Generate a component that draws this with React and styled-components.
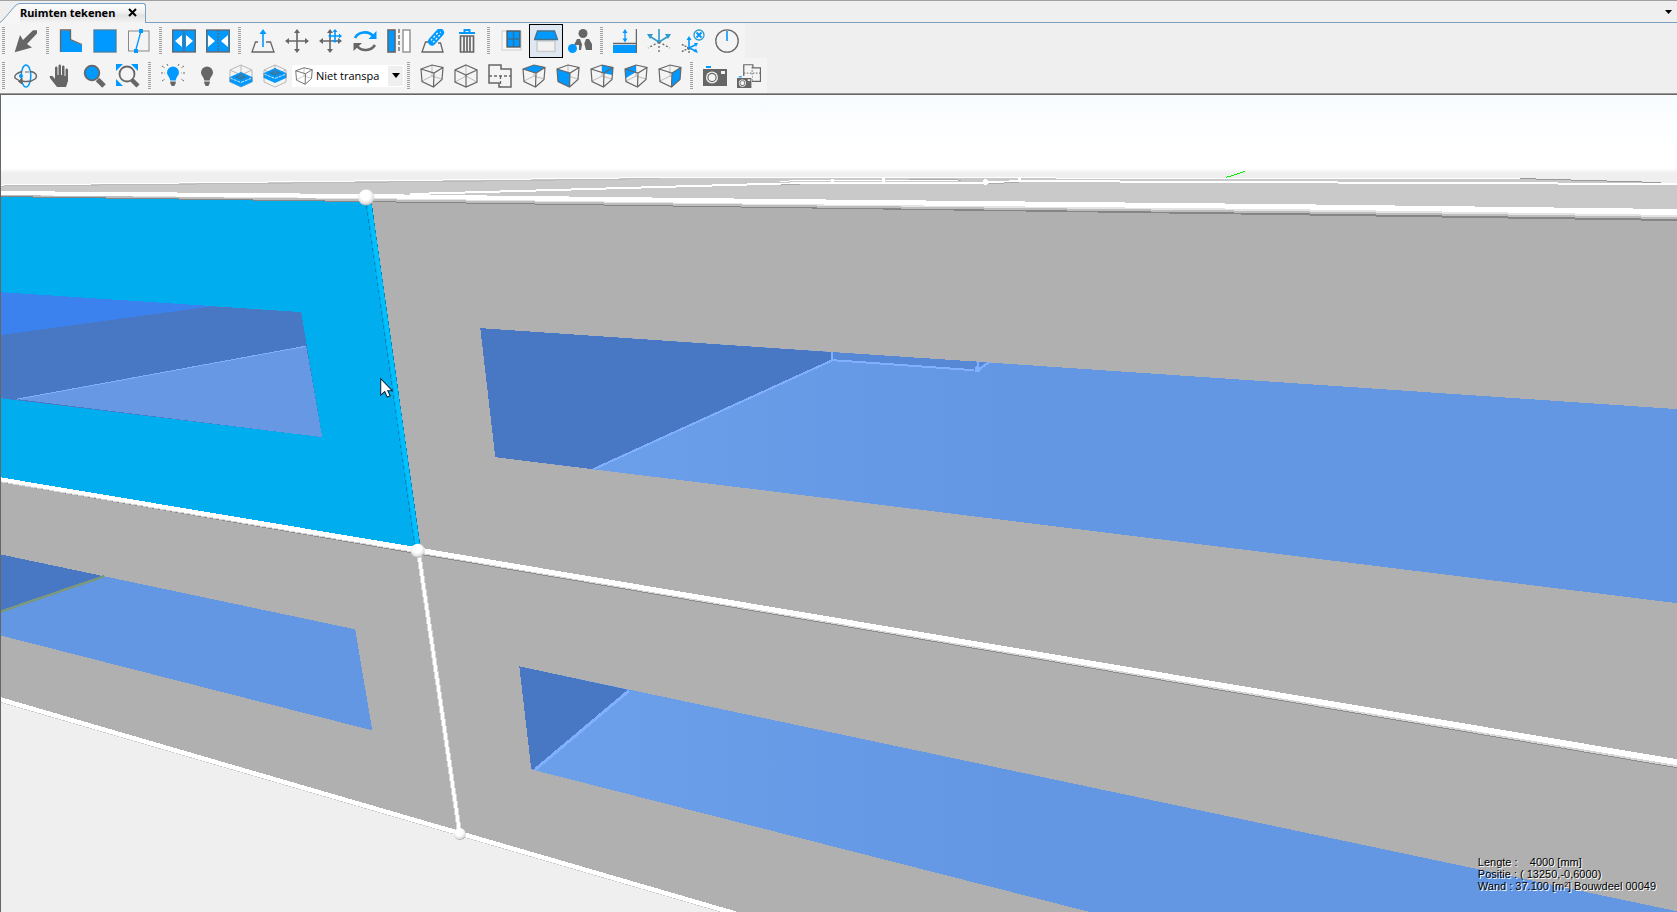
import React from "react";
import styled, { createGlobalStyle, css } from "styled-components";

const G = "#666666";
const B = "#0099ff";

const GlobalStyle = createGlobalStyle`
  *, *::before, *::after { box-sizing: border-box; }
  html, body, #root { height: 100%; }
  body {
    margin: 0;
    overflow: hidden;
    background: #efefef;
    color: #000;
    font-family: "Open Sans", "Noto Sans", sans-serif;
    font-size: 12px;
  }
`;

const Window = styled.div`
  display: flex;
  flex-direction: column;
  height: 100%;
  border-top: 1px solid #a0a0a0;
`;

const TabStrip = styled.header`
  display: flex;
  height: 22px;
  flex: none;
  padding-top: 2px;
`;

const TabSlant = styled.svg`
  display: block;
  flex: none;
`;

const Tab = styled.div`
  display: flex;
  align-items: center;
  justify-content: space-between;
  width: 126px;
  padding: 0 8px 2px 0;
  border: 1px solid #7ba0c0;
  border-width: 1px 1px 0 0;
  border-radius: 0 3px 0 0;
  background: linear-gradient(#ffffff, #f0f0f0 45%, #e2e2e2 60%, #f4f4f4);
`;

const TabTitle = styled.h1`
  margin: 0;
  font-family: "Noto Sans", sans-serif;
  font-size: 11px;
  line-height: 16px;
  font-weight: 700;
  white-space: nowrap;
`;

const PlainButton = styled.button`
  display: grid;
  place-items: center;
  padding: 0;
  border: 0;
  background: transparent;
`;

const TabFiller = styled.div`
  display: flex;
  flex: 1;
  align-items: center;
  justify-content: flex-end;
  padding: 0 5px 2px 0;
  border-bottom: 1px solid #7ba0c0;
`;

const Toolbars = styled.div`
  display: flex;
  flex-direction: column;
  align-items: flex-start;
  flex: none;
  border-bottom: 1px solid #999;
`;

const Toolbar = styled.div`
  display: flex;
  align-items: center;
  height: 35px;
  padding-right: 1px;
  background: #f4f4f4;
`;

const Grip = styled.span`
  width: 3px;
  height: 27px;
  margin: 0 5px 0 3px;
  background: repeating-linear-gradient(#a0a0a0 0 1px, #f4f4f4 1px 2px);
  &:first-child { margin: 0 4px 0 2px; }
`;

const ToolButton = styled(PlainButton)`
  width: 34px;
  height: 34px;
  ${(p) => p.$active && css`
    border: 1px solid #000;
    background: #dfe8f1;
  `}
`;

const Combo = styled.label`
  display: flex;
  align-items: center;
  width: 112px;
  height: 22px;
  padding: 0 1px 0 3px;
  gap: 3px;
  background: #fff;
`;

const ComboSelect = styled.select`
  appearance: none;
  flex: 1;
  min-width: 0;
  height: 22px;
  padding: 0;
  border: 0;
  background: transparent;
  color: #000;
  font: 11px/20px "Open Sans", "Noto Sans", sans-serif;
`;

const ComboArrow = styled.span`
  display: grid;
  place-items: center;
  width: 15px;
  height: 20px;
  background: #efefef;
`;

const Viewport = styled.main`
  position: relative;
  flex: 1;
  min-height: 0;
  border: solid #666;
  border-width: 1px 0 0 1px;
`;

const SceneSvg = styled.svg`
  display: block;
  width: 100%;
  height: 100%;
`;

const Status = styled.dl`
  position: absolute;
  right: 21px;
  bottom: 20px;
  margin: 0;
  font: 11px/12px "Liberation Sans", Arial, sans-serif;
  text-shadow: 1px 1px 0 #fff;
  white-space: pre;
`;

const StatusLine = styled.div`
  display: flex;
`;

const StatusTerm = styled.dt``;

const StatusValue = styled.dd`
  margin: 0;
`;

function Icon({ children, size = 24 }) {
  return (
    <svg width={size} height={size} viewBox="0 0 24 24" fill="none" stroke={G} strokeWidth="1.3" aria-hidden="true">
      {children}
    </svg>
  );
}

/* Wireframe box with an optional highlighted face. */
function Box({ face, size }) {
  return (
    <Icon size={size}>
      <path d="M12 1V12L2 17M12 12L22 15" stroke="#bbb" strokeWidth="1" />
      {face && <polygon points={face} fill={B} stroke="none" />}
      <path d="M1 5L12 1L23 3.5L22 15.5L13.5 23L2 17.5ZM1 5L14 9L23 3.5M14 9L13.5 23" strokeWidth="1.2" />
    </Icon>
  );
}

/* Wire box holding a blue slab whose top face is centred on the given height. */
function Slab({ y }) {
  return (
    <Icon>
      <path d="M12 1L23 6V18L12 23L1 18V6ZM1 6L12 11L23 6M12 1V8" stroke="#b8b8b8" strokeWidth="1" />
      <path d={`M1 ${y}L12 ${y - 5}L23 ${y}V${y + 5}L12 ${y + 10}L1 ${y + 5}Z`} fill={B} stroke="none" />
      <path d={`M5 ${y}L12 ${y - 3}L19 ${y}L12 ${y + 3}Z`} fill="#2b7fb5" stroke="none" />
      <path d={`M1 ${y + 1}L12 ${y + 5.5}L23 ${y + 1}`} stroke="#d8e8f4" strokeWidth="1" strokeDasharray="3 1" />
      <path d={`M12 ${y - 5}V${y}M1 ${y}V${y + 5}M23 ${y}V${y + 5}`} stroke="#5a7f99" strokeWidth="1" />
    </Icon>
  );
}

function Bulb({ color, rays }) {
  return (
    <Icon>
      {rays && (
        <path d="M1 2L4 4M23 2L20 4M0 9H3.500M24 9H20.500M1 17L4 15M23 17L20 15M6 0L7 2M18 0L17 2" stroke={G} strokeWidth="1" strokeDasharray="2 1" />
      )}
      <path d="M12 2.500a6 6 0 0 1 6 6c0 3-3 4.500-3.200 8H9.200C9 13 6 11.500 6 8.500a6 6 0 0 1 6-6Z" fill={color} stroke="none" />
      <path d="M9.200 17.500h5.600v1.500l-1.500 3h-2.600l-1.500-3Z" fill={G} stroke="none" />
    </Icon>
  );
}

const CameraShape = () => (
  <g stroke="none">
    <rect x="3" y="2" width="5" height="2" fill={B} />
    <path d="M0 5H24V22H0Z" fill={G} />
    <rect x="18" y="7" width="4" height="3" fill="#f4f4f4" />
    <circle cx="9" cy="13.500" r="6" fill="#f4f4f4" />
    <circle cx="9" cy="13.500" r="4.700" fill={G} />
    <circle cx="9" cy="13.500" r="3.500" fill="#f4f4f4" />
  </g>
);

const PLAN = "M1 1H13V5H23V23H11V19H1Z";

const icons = {
  select: <Icon><polygon points="0.7,23.3 6,6 9,11 19,1.3 23,1.3 23,4.5 13,15 18,18.5" fill={G} stroke="none" /></Icon>,
  outline: <Icon><path d="M1.500 1.500H11.500V11L23 16V23H1.500Z" fill={B} stroke="none" /><path d="M1.500 23V1H11.500V10.500L23 15.500" /></Icon>,
  rect: <Icon><rect x="1" y="1" width="22" height="22" fill={B} stroke="#477f9e" /></Icon>,
  split: <Icon><rect x="1.500" y="2" width="20.500" height="20" strokeWidth="1" stroke="#888" /><path d="M8.500 22L14 2" stroke={B} /><path d="M12 0H16V4H12ZM7 20H11V24H7Z" fill={B} stroke="none" /></Icon>,
  spread: <Icon><rect x="0.600" y="1" width="22.800" height="22" fill={B} /><path d="M12 1V23" /><path d="M10 6V18L3 12ZM14 6V18L21 12Z" fill="#fff" stroke="none" /></Icon>,
  join: <Icon><rect x="0.600" y="1" width="22.800" height="22" fill={B} /><path d="M12 1V23" strokeDasharray="2 1" /><path d="M2 6V18L9 12ZM22 6V18L15 12Z" fill="#fff" stroke="none" /></Icon>,
  extrude: <Icon><path d="M7 13H4.500L1 23H23L19.500 13H15" /><path d="M12 18V3" stroke={B} strokeWidth="1.600" /><path d="M8.500 5L12 0L15.500 5Z" fill={B} stroke="none" /></Icon>,
  move: <Icon><path d="M12 3V21M3 12H21" strokeWidth="1.600" /><path d="M12 0L15 4H9ZM12 24L15 20H9ZM0 12L4 9V15ZM24 12L20 9V15Z" fill={G} stroke="none" /></Icon>,
  copyMove: <Icon><path d="M11 3V21M3 12H21" strokeWidth="1.600" /><path d="M11 0L14 4H8ZM11 24L14 20H8ZM0 12L4 9V15ZM23 12L19 9V15Z" fill={G} stroke="none" /><path d="M16 1V13M10 7H22" stroke={B} strokeWidth="1.600" /><path d="M16 0L18.500 3H13.500ZM16 14L18.500 11H13.500ZM9 7L12 4.500V9.500ZM23 7L20 4.500V9.500Z" fill={B} stroke="none" /></Icon>,
  rotate: <Icon><path d="M2 9C5 3 15 1 20 7" stroke={B} strokeWidth="2.600" /><path d="M23.500 2V10H15.500Z" fill={B} stroke="none" /><path d="M22 16C18 22 9 23 4 17" strokeWidth="2.600" /><path d="M0.500 22V14H9Z" fill={G} stroke="none" /></Icon>,
  mirror: <Icon><rect x="1" y="1" width="7" height="22" fill={B} strokeWidth="1.600" /><path d="M12 0V24" strokeDasharray="4 2" /><rect x="16" y="1" width="7" height="22" stroke="#888" fill="#fff" /></Icon>,
  repair: <Icon><path d="M7 13H4.500L1 23H22L19.500 14H17" /><g transform="rotate(-48 15 8)"><rect x="5" y="4" width="20" height="8" rx="4" fill={B} stroke="none" /><path d="M9 6.500h2M9 9.500h2M13 6.500h2M13 9.500h2M17 6.500h2M17 9.500h2M21 8h1" stroke="#fff" strokeWidth="1.200" /></g></Icon>,
  trash: <Icon><path d="M4 4H20M9.500 3V1H14.500V3" stroke={B} strokeWidth="2" /><path d="M5.500 7H18.500V23H5.500ZM9 7V23M12 7V23M15 7V23" strokeWidth="1.700" /></Icon>,
  window: <Icon><rect x="2" y="2" width="19" height="19" stroke="#ccc" fill="#f8f8f8" strokeWidth="1" /><rect x="7" y="2" width="13" height="16" fill={B} stroke="#555" /><path d="M13.500 2V18M7 10H20" stroke="#356f96" /></Icon>,
  roof: <Icon><path d="M3 12H21V22.500H3Z" fill="#f2f2f2" stroke="#ccc" strokeWidth="1.600" /><path d="M3.500 2H20.500L23.500 10.500H0.500Z" fill={B} stroke="#46718c" /></Icon>,
  people: <Icon><circle cx="15" cy="4.500" r="4.500" fill={G} stroke="none" /><path d="M9 10H12L15 18L18 10H21L24 15V21H11V16H6Z" fill={G} stroke="none" /><path d="M15 10L13 21H18Z" fill="#f4f4f4" stroke="none" /><circle cx="4.500" cy="19.500" r="4.500" fill={B} stroke="none" /></Icon>,
  level: <Icon><rect x="0" y="16" width="23" height="8" fill={B} stroke="none" /><path d="M0 14.500H23.500M23.500 0V24" strokeWidth="1.500" /><path d="M12 3V11" stroke={B} /><path d="M12 0L14.500 4H9.500ZM12 13.500L14.500 9.500H9.500Z" fill={B} stroke="none" /></Icon>,
  axes: <Icon><path d="M12 13L1 19M12 13L23 19M12 13V24" strokeDasharray="2 2" /><path d="M12 13V0M12 13L3 7.500M12 13L21 7.500" stroke="#2f9acb" strokeWidth="1.600" /><path d="M0 5H6L3 10ZM24 5H18L21 10Z" fill="#2f9acb" stroke="none" /></Icon>,
  axesPoint: <Icon><path d="M8 19L0 15M8 19L0 23M8 19V24" strokeDasharray="2 1" /><path d="M8 19V9M8 19L14 16M8 19L15 22" stroke={B} strokeWidth="1.600" /><path d="M8 7L10.500 11H5.500ZM17 14L13 14L15 18ZM17 24L12.500 22.500L15 19.500Z" fill={B} stroke="none" /><circle cx="18" cy="6" r="5" stroke="#2f9acb" /><path d="M15.500 3.500L20.500 8.500M20.500 3.500L15.500 8.500" stroke={B} strokeWidth="2" /></Icon>,
  dial: <Icon><circle cx="12" cy="12" r="11.200" /><path d="M12 12V2" stroke={B} strokeWidth="1.600" /></Icon>,

  orbit: <Icon><ellipse cx="12" cy="12" rx="4.800" ry="11" stroke={B} strokeWidth="1.500" /><path d="M16 7.500C22 8 24 12 21 15C18 17.500 13 18 8 17M8 7.500C3 9 0 11 1 14L5 16.500" strokeWidth="1.400" /><path d="M8 14L4.500 17.500L8 20ZM15 8H11" fill={G} strokeWidth="1" /><circle cx="7" cy="12" r="2" fill={B} stroke="none" /></Icon>,
  pan: <Icon><path d="M9 23L2 14C1 12 3 11 5 12.500L7 15V4C7 2 9.500 2 9.500 4V11H10.500V2C10.500 0 13 0 13 2V11H14V3C14 1 16.500 1 16.500 3V12H17.500V6C17.500 4 20 4 20 6V17L18 23Z" fill={G} stroke="none" /></Icon>,
  zoom: <Icon><path d="M15.500 15.500L22 22" strokeWidth="5" /><circle cx="10" cy="9" r="7.300" fill={B} strokeWidth="1.800" /></Icon>,
  zoomFit: <Icon><path d="M0 0H7L0 7ZM22 0V7L15 0ZM0 22V15L7 22Z" fill={B} stroke="none" /><path d="M16 16L22 22" strokeWidth="4.500" /><circle cx="11" cy="10" r="7.500" fill="#f4f4f4" strokeWidth="1.800" /></Icon>,
  lightOn: <Bulb color={B} rays />,
  lightOff: <Bulb color={G} />,
  slabLow: <Slab y={13} />,
  slabMid: <Slab y={9} />,
  perspective: <Box />,
  isometric: <Icon><path d="M12 1V12L1 18M12 12L23 18" stroke="#bbb" strokeWidth="1" /><path d="M12 1L23 6V18L12 23L1 18V6ZM1 6L12 11L23 6M12 11V23" strokeWidth="1.200" /></Icon>,
  plan: <Icon><path d={PLAN} strokeWidth="1.500" /><path d="M1 12H23M12.500 12V23" strokeDasharray="3 2" /></Icon>,
  top: <Box face="1,5 12,1 23,3.500 14,9" />,
  front: <Box face="1,5 14,9 13.500,23 2,17.500" />,
  back: <Box face="12,1 23,3.500 22.500,11 12,9" />,
  left: <Box face="1,5 12,1 12,8 2,14" />,
  right: <Box face="14,9 23,3.500 22,15.500 13.500,23" />,
  camera: <Icon><CameraShape /></Icon>,
  planCamera: <Icon><g transform="translate(6 0) scale(.76)"><path d={PLAN} strokeWidth="1.600" /><path d="M1 12H23M12 4V23" strokeDasharray="2 2" /></g><path d="M0 12H15V24H0Z" fill="#f4f4f4" stroke="none" /><g transform="translate(0 11) scale(.6)"><CameraShape /></g></Icon>,
};

const drawTools = [
  [["select", "Selecteren"]],
  [["outline", "Veelhoek"], ["rect", "Rechthoek"], ["split", "Splitsen"]],
  [["spread", "Scheiden"], ["join", "Samenvoegen"]],
  [["extrude", "Extruderen"], ["move", "Verplaatsen"], ["copyMove", "Kopiëren"], ["rotate", "Roteren"], ["mirror", "Spiegelen"], ["repair", "Herstellen"], ["trash", "Verwijderen"]],
  [["window", "Raam"], ["roof", "Dak"], ["people", "Personen"]],
  [["level", "Peil"], ["axes", "Assen"], ["axesPoint", "Oorsprong"], ["dial", "Noordpijl"]],
];

const navTools = [["orbit", "Draaien"], ["pan", "Schuiven"], ["zoom", "Zoomen"], ["zoomFit", "Alles tonen"]];
const lightTools = [["lightOn", "Licht aan"], ["lightOff", "Licht uit"], ["slabLow", "Onderste laag"], ["slabMid", "Middelste laag"]];
const viewTools = [["perspective", "Perspectief"], ["isometric", "Isometrisch"], ["plan", "Plattegrond"], ["top", "Boven"], ["front", "Voor"], ["back", "Achter"], ["left", "Links"], ["right", "Rechts"]];
const photoTools = [["camera", "Foto"], ["planCamera", "Foto plattegrond"]];

function ToolGroup({ tools, active }) {
  return (
    <>
      <Grip />
      {tools.map(([id, label]) => (
        <ToolButton key={id} type="button" aria-label={label} aria-pressed={active === id} $active={active === id}>
          {icons[id]}
        </ToolButton>
      ))}
    </>
  );
}

function Node({ x, y, r }) {
  return <circle cx={x} cy={y} r={r} fill="url(#ball)" />;
}

function Scene() {
  return (
    <SceneSvg viewBox="1 95 1675 817" preserveAspectRatio="xMinYMin slice" role="img" aria-label="3D-model" shapeRendering="crispEdges">
      <defs>
        <linearGradient id="sky" x1="0" y1="0" x2="0" y2="1">
          <stop offset="0" stopColor="#f8fcff" />
          <stop offset=".7" stopColor="#ffffff" />
          <stop offset=".94" stopColor="#ffffff" />
          <stop offset="1" stopColor="#efefef" />
        </linearGradient>
        <linearGradient id="floor" gradientUnits="userSpaceOnUse" x1="600" y1="0" x2="1000" y2="0">
          <stop offset="0" stopColor="#6c9fea" />
          <stop offset="1" stopColor="#6497e3" />
        </linearGradient>
        <radialGradient id="ball" cx=".45" cy=".35" r=".68">
          <stop offset=".45" stopColor="#ffffff" />
          <stop offset=".8" stopColor="#dddddd" />
          <stop offset="1" stopColor="#999999" />
        </radialGradient>
      </defs>

      <rect x="0" y="94" width="1678" height="820" fill="#efefef" />
      <rect x="0" y="94" width="1678" height="79" fill="url(#sky)" />
      <polygon points="0,185 659,178 1519,178 1660,183 1677,184 1677,214 0,194" fill="#c9c9c9" />
      <polygon points="0,196 1677,218 1677,913 735,913 0,699" fill="#b0b0b0" />

      {/* roof edges near the horizon */}
      <path d="M0 186L480 181L659 178.500" stroke="#bbbbbb" fill="none" />
      <g fill="none" stroke="#fff">
        <path d="M0 185L659 177.500L1519 178.500" />
        <path d="M410 194L780 183.500L985 182.500L1019 181L1677 184" strokeWidth="2" />
        <path d="M780 181L960 180" />
      </g>
      <path d="M1519 178.500L1660 182.500" stroke="#999" fill="none" />
      <path d="M780 185L800 184M908 179L960 180M988 184L1018 182" stroke="#aaa" fill="none" />
      <g fill="#fff">
        <circle cx="832" cy="181" r="2" /><circle cx="883" cy="180" r="2" />
        <circle cx="985" cy="182" r="3" /><circle cx="1019" cy="180" r="2" /><circle cx="998" cy="177" r="1" />
      </g>
      <path d="M1225 177.500L1244 171.500" stroke="#00f000" />

      {/* selected wall and its window */}
      <polygon points="0,196 367,202 418,549 0,480" fill="#00aeef" />
      <polygon points="0,292 301,312 322,437 0,398" fill="#4878c4" />
      <polygon points="0,292 213,306 0,335" fill="#3c82ee" />
      <polygon points="17,399 306,346 322,437" fill="#6698e4" />
      <path d="M17 399L306 346" stroke="#82b0ff" />

      {/* upper right window */}
      <polygon points="480,328 1677,409 1677,603 495,457" fill="url(#floor)" />
      <polygon points="480,328 832,352 832,360 593,469 495,457" fill="#4878c4" />
      <polygon points="832,352 985,362 976,370 832,360" fill="#5688d6" />
      <path d="M593 469L832 360" stroke="#80b0ff" strokeWidth="2" />
      <path d="M832 352V360L973 370M977 361V370L989 362" stroke="#80b0ff" strokeWidth="2" fill="none" />
      <circle cx="977" cy="369" r="3" fill="#80b0ff" />

      {/* lower windows */}
      <polygon points="0,554 355,629 372,730 0,635" fill="#6497e3" />
      <polygon points="0,554 104,576 0,612" fill="#4878c4" />
      <path d="M0 611.500L104 576" stroke="#7b987f" strokeWidth="2.500" />
      <polygon points="519,666 1677,911 1677,913 1095,913 531,769" fill="url(#floor)" />
      <polygon points="519,666 630,690 534,769 531,769" fill="#4878c4" />
      <path d="M535 769L629 690" stroke="#80b0ff" strokeWidth="3" />

      {/* upper beam */}
      <polygon points="0,191 366,194 780,199 1280,204 1677,209 1677,221 1280,215 780,208 366,202 0,197" fill="#858585" />
      <polygon points="0,191 366,194 780,199 1280,204 1677,209 1677,219 1280,213 780,207 366,201 0,196" fill="#bdbdbd" />
      <polygon points="0,191 366,194 780,199 1280,204 1677,209 1677,217 1280,211 780,205 366,199 0,195" fill="#e4e4e4" />
      <polygon points="0,191 366,194 780,199 1280,204 1677,209 1677,215 1280,209 780,204 366,198 0,195" fill="#ffffff" />

      {/* middle beam */}
      <polygon points="0,477 417,547 1677,759 1677,768 417,554 0,482" fill="#8c8c8c" />
      <polygon points="0,477 417,547 1677,759 1677,767 417,553 0,482" fill="#d5d5d5" />
      <polygon points="0,477 417,547 1677,759 1677,765 417,552 0,481" fill="#ffffff" />

      {/* ground beam */}
      <path d="M0 701.500L740 917" stroke="#cccccc" />
      <path d="M0 699L740 914.500" stroke="#ffffff" strokeWidth="4.500" />

      {/* posts */}
      <path d="M418 550L459 830" stroke="#d5d5d5" strokeWidth="5" />
      <path d="M418 550L459 830" stroke="#ffffff" strokeWidth="3" />
      <path d="M368.500 203L417.500 548" stroke="#0784b4" strokeWidth="6" />
      <path d="M368.500 203L417.500 548" stroke="#00aeef" strokeWidth="5" />
      <path d="M369 203L418 548" stroke="#00bfff" strokeWidth="4" />

      <g shapeRendering="auto">
        <Node x={366} y={197.500} r={8} />
        <Node x={417.500} y={550.500} r={7} />
        <Node x={459.500} y={833.500} r={6} />
        <path d="M380.500 378.500V395L384.500 391.500L387 397L390 395.500L387.500 390.500H392Z" fill="#fff" stroke="#05233a" />
      </g>
    </SceneSvg>
  );
}

export default function App() {
  return (
    <Window>
      <GlobalStyle />
      <TabStrip>
        <TabSlant width="20" height="20" viewBox="0 0 20 20" aria-hidden="true">
          <path d="M0 20L2 18L15 3Q17.500 .5 20 .5V20Z" fill="#f6f6f6" />
          <path d="M0 19.500L2 18L15 3Q17.500 .5 20 .5" fill="none" stroke="#7ba0c0" />
        </TabSlant>
        <Tab>
          <TabTitle>Ruimten tekenen</TabTitle>
          <PlainButton type="button" aria-label="Sluiten">
            <svg width="9" height="9" viewBox="0 0 9 9"><path d="M1 1L8 8M8 1L1 8" stroke="#000" strokeWidth="2" /></svg>
          </PlainButton>
        </Tab>
        <TabFiller>
          <PlainButton type="button" aria-label="Vensters">
            <svg width="7" height="4" viewBox="0 0 7 4"><path d="M0 0H7L3.500 4Z" fill="#000" /></svg>
          </PlainButton>
        </TabFiller>
      </TabStrip>
      <Toolbars>
        <Toolbar role="toolbar" aria-label="Tekenen">
          {drawTools.map((tools, i) => <ToolGroup key={i} tools={tools} active="roof" />)}
        </Toolbar>
        <Toolbar role="toolbar" aria-label="Weergave">
          <ToolGroup tools={navTools} />
          <ToolGroup tools={lightTools} />
          <Combo>
            <Box size={18} />
            <ComboSelect aria-label="Transparantie" defaultValue="solid">
              <option value="solid">Niet transpa</option>
            </ComboSelect>
            <ComboArrow>
              <svg width="8" height="5" viewBox="0 0 8 5"><path d="M0 0H8L4 5Z" fill="#000" /></svg>
            </ComboArrow>
          </Combo>
          <ToolGroup tools={viewTools} />
          <ToolGroup tools={photoTools} />
        </Toolbar>
      </Toolbars>
      <Viewport>
        <Scene />
        <Status>
          <StatusLine><StatusTerm>{"Lengte :    "}</StatusTerm><StatusValue>4000 [mm]</StatusValue></StatusLine>
          <StatusLine><StatusTerm>{"Positie : "}</StatusTerm><StatusValue>( 13250,-0,6000)</StatusValue></StatusLine>
          <StatusLine><StatusTerm>{"Wand : "}</StatusTerm><StatusValue>37.100 [m²] Bouwdeel 00049</StatusValue></StatusLine>
        </Status>
      </Viewport>
    </Window>
  );
}
